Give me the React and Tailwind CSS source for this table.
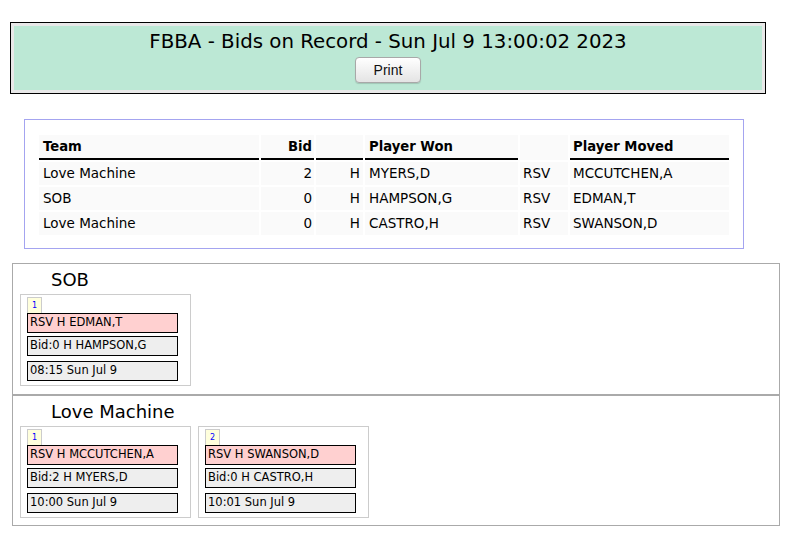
import React from 'react';

const bids = [
  { team: 'Love Machine', bid: 2, won: 'MYERS,D', moved: 'MCCUTCHEN,A' },
  { team: 'SOB', bid: 0, won: 'HAMPSON,G', moved: 'EDMAN,T' },
  { team: 'Love Machine', bid: 0, won: 'CASTRO,H', moved: 'SWANSON,D' },
];

const teams = [
  {
    name: 'SOB',
    cards: [{ n: 1, moved: 'EDMAN,T', bid: 0, won: 'HAMPSON,G', time: '08:15 Sun Jul 9' }],
  },
  {
    name: 'Love Machine',
    cards: [
      { n: 1, moved: 'MCCUTCHEN,A', bid: 2, won: 'MYERS,D', time: '10:00 Sun Jul 9' },
      { n: 2, moved: 'SWANSON,D', bid: 0, won: 'CASTRO,H', time: '10:01 Sun Jul 9' },
    ],
  },
];

function BidCard({ card }) {
  return (
    <div className="w-[171px] border border-[#cccccc] pt-[2px] pl-[6px] pb-[4px] flex flex-col">
      <div className="w-[15px] h-[16px] bg-[#ffffdc] border border-[#cccccc] border-b-0 flex items-center justify-center text-[8px] text-[#0000ff]">
        {card.n}
      </div>
      <div className="w-[151px] h-[20px] border border-black bg-[#ffd0d0] pl-[2px] flex items-center text-[11.5px]">
        RSV H {card.moved}
      </div>
      <div className="w-[151px] h-[20px] mt-[3px] border border-black bg-[#eeeeee] pl-[2px] flex items-center text-[11.5px]">
        Bid:{card.bid} H {card.won}
      </div>
      <div className="w-[151px] h-[20px] mt-[5px] border border-black bg-[#eeeeee] pl-[2px] flex items-center text-[11.5px]">
        {card.time}
      </div>
    </div>
  );
}

export default function App() {
  return (
    <div className="w-[787px] h-[547px] bg-white text-black font-['DejaVu_Sans',sans-serif] overflow-hidden">
      {/* ── Title bar ── */}
      <div className="pt-[22px] pl-[10px]">
        <div className="w-[756px] border border-black bg-[#e8e8e8] p-[3px]">
          <div className="h-[64px] bg-[#bce8d5] flex flex-col items-center pt-[4px]">
            <h1 className="text-[19.8px] leading-[24px]">FBBA - Bids on Record - Sun Jul 9 13:00:02 2023</h1>
            <button className="mt-[3px] w-[66px] h-[26px] rounded-[4px] border border-[#a8a8a8] bg-gradient-to-b from-white to-[#e4e4e4] shadow-[0_1px_1px_rgba(0,0,0,0.15)] text-[14px] font-['Liberation_Sans',sans-serif] text-[#111]">
              Print
            </button>
          </div>
        </div>
      </div>

      {/* ── Bids table ── */}
      <div className="mt-[25px] ml-[24px] w-[720px] border border-[#a4a4f0] pt-[15px] pl-[14px] pb-[13px]">
        <div className="grid grid-cols-[220px_53px_47px_153px_48px_159px] gap-x-[2px] gap-y-[2px] text-[13.5px]">
          <div className="h-[25px] bg-[#fafafa] border-b-2 border-black pl-[4px] flex items-center font-bold text-[13.2px]">Team</div>
          <div className="h-[25px] bg-[#fafafa] border-b-2 border-black pr-[2px] flex items-center justify-end font-bold text-[13.2px]">Bid</div>
          <div className="h-[25px] bg-[#fafafa] border-b-2 border-black"></div>
          <div className="h-[25px] bg-[#fafafa] border-b-2 border-black pl-[4px] flex items-center font-bold text-[13.2px]">Player Won</div>
          <div className="h-[25px] bg-[#fafafa]"></div>
          <div className="h-[25px] bg-[#fafafa] border-b-2 border-black pl-[3px] flex items-center font-bold text-[13.2px]">Player Moved</div>
          {bids.map((b, i) => (
            <React.Fragment key={i}>
              <div className="h-[23px] bg-[#fafafa] pl-[4px] flex items-center">{b.team}</div>
              <div className="h-[23px] bg-[#fafafa] pr-[2px] flex items-center justify-end">{b.bid}</div>
              <div className="h-[23px] bg-[#fafafa] pr-[3px] flex items-center justify-end">H</div>
              <div className="h-[23px] bg-[#fafafa] pl-[4px] flex items-center">{b.won}</div>
              <div className="h-[23px] bg-[#fafafa] pl-[3px] flex items-center">RSV</div>
              <div className="h-[23px] bg-[#fafafa] pl-[3px] flex items-center">{b.moved}</div>
            </React.Fragment>
          ))}
        </div>
      </div>

      {/* ── Team sections ── */}
      <div className="mt-[14px] ml-[12px] w-[768px]">
        {teams.map((t, i) => (
          <div
            key={t.name}
            className={`border border-[#aaaaaa] pt-[5px] ${i === 0 ? 'pb-[8px]' : 'pb-[7px]'}`}
          >
            <h2 className="pl-[38px] text-[18px] leading-[22px]">{t.name}</h2>
            <div className="mt-[3px] pl-[7px] flex gap-[7px]">
              {t.cards.map((c) => (
                <BidCard key={c.n} card={c} />
              ))}
            </div>
          </div>
        ))}
      </div>
    </div>
  );
}
